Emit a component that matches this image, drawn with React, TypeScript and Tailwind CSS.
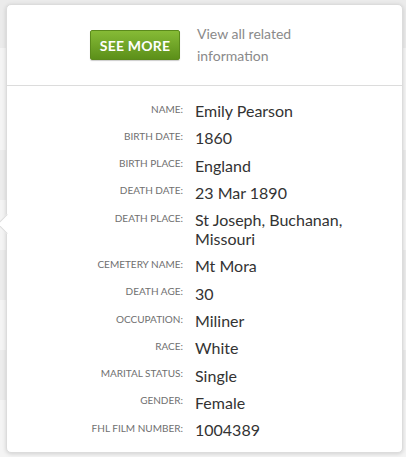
import React from 'react';

type Fact = { label: string; value: string[] };

const facts: Fact[] = [
  { label: 'Name:', value: ['Emily Pearson'] },
  { label: 'Birth Date:', value: ['1860'] },
  { label: 'Birth Place:', value: ['England'] },
  { label: 'Death Date:', value: ['23 Mar 1890'] },
  { label: 'Death Place:', value: ['St Joseph, Buchanan,', 'Missouri'] },
  { label: 'Cemetery Name:', value: ['Mt Mora'] },
  { label: 'Death Age:', value: ['30'] },
  { label: 'Occupation:', value: ['Miliner'] },
  { label: 'Race:', value: ['White'] },
  { label: 'Marital Status:', value: ['Single'] },
  { label: 'Gender:', value: ['Female'] },
  { label: 'FHL Film Number:', value: ['1004389'] },
];

export default function App() {
  return (
    <div className="relative w-[406px] h-[457px] overflow-hidden bg-[#f4f4f4] pt-[4px] pl-[6px] font-['Lato',sans-serif]">
      {/* page rows peeking out behind the popover */}
      <div className="absolute left-0 top-0 w-full h-[48px] bg-[#ebebeb]" />
      <div className="absolute left-0 top-[150px] w-full h-[50px] bg-[#ececec]" />
      <div className="absolute left-0 top-[250px] w-full h-[50px] bg-[#ececec]" />
      <div className="absolute left-0 top-[350px] w-full h-[50px] bg-[#ececec]" />

      {/* popover */}
      <div className="relative w-[397px] h-[449px] bg-white border border-[#dcdcdc] rounded-[5px] shadow-[0_1px_4px_rgba(0,0,0,0.15)]">
        {/* arrow */}
        <div className="absolute left-[-7px] top-[212px] w-[14px] h-[14px] rotate-45 bg-white border-l border-b border-[#dcdcdc]" />

        <div className="relative flex items-center h-[81px] pl-[83px] border-b border-[#dcdcdc]">
          <button className="w-[90px] h-[30px] rounded-[2px] border border-[#5b8a1c] bg-gradient-to-b from-[#86bb36] to-[#5c9019] text-white text-[14px] font-bold tracking-[0.2px] shadow-[0_1px_1px_rgba(0,0,0,0.2)]">
            SEE MORE
          </button>
          <div className="ml-[17px] text-[14px] leading-[22px] text-[#8a8a8a]">
            View all related
            <br />
            information
          </div>
        </div>

        <div className="relative flex flex-col gap-[8.3px] pt-[15px]">
          {facts.map((f) => (
            <div key={f.label} className="flex items-start">
              <div className="w-[176px] shrink-0 text-right text-[10px] leading-[12px] pt-[1.5px] uppercase text-[#6f6f6f]">
                {f.label}
              </div>
              <div className="ml-[12px] text-[16px] leading-[19px] text-[#333333]">
                {f.value.map((v) => (
                  <div key={v}>{v}</div>
                ))}
              </div>
            </div>
          ))}
        </div>
      </div>
    </div>
  );
}
